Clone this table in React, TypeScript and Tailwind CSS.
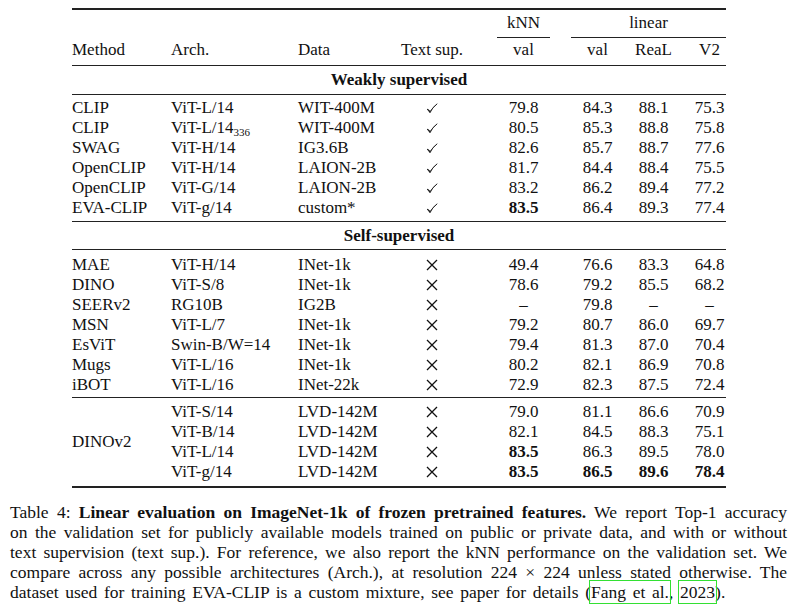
import type { ReactNode } from "react";

type Row = {
  method: string;
  arch: ReactNode;
  data: string;
  text: boolean;
  vals: string[]; // "**" prefix = bold
};

const WEAKLY: Row[] = [
  { method: "CLIP", arch: "ViT-L/14", data: "WIT-400M", text: true, vals: ["79.8", "84.3", "88.1", "75.3"] },
  {
    method: "CLIP",
    arch: (
      <>
        ViT-L/14<sub className="text-[11px]">336</sub>
      </>
    ),
    data: "WIT-400M",
    text: true,
    vals: ["80.5", "85.3", "88.8", "75.8"],
  },
  { method: "SWAG", arch: "ViT-H/14", data: "IG3.6B", text: true, vals: ["82.6", "85.7", "88.7", "77.6"] },
  { method: "OpenCLIP", arch: "ViT-H/14", data: "LAION-2B", text: true, vals: ["81.7", "84.4", "88.4", "75.5"] },
  { method: "OpenCLIP", arch: "ViT-G/14", data: "LAION-2B", text: true, vals: ["83.2", "86.2", "89.4", "77.2"] },
  { method: "EVA-CLIP", arch: "ViT-g/14", data: "custom*", text: true, vals: ["**83.5", "86.4", "89.3", "77.4"] },
];

const SELF: Row[] = [
  { method: "MAE", arch: "ViT-H/14", data: "INet-1k", text: false, vals: ["49.4", "76.6", "83.3", "64.8"] },
  { method: "DINO", arch: "ViT-S/8", data: "INet-1k", text: false, vals: ["78.6", "79.2", "85.5", "68.2"] },
  { method: "SEERv2", arch: "RG10B", data: "IG2B", text: false, vals: ["–", "79.8", "–", "–"] },
  { method: "MSN", arch: "ViT-L/7", data: "INet-1k", text: false, vals: ["79.2", "80.7", "86.0", "69.7"] },
  { method: "EsViT", arch: "Swin-B/W=14", data: "INet-1k", text: false, vals: ["79.4", "81.3", "87.0", "70.4"] },
  { method: "Mugs", arch: "ViT-L/16", data: "INet-1k", text: false, vals: ["80.2", "82.1", "86.9", "70.8"] },
  { method: "iBOT", arch: "ViT-L/16", data: "INet-22k", text: false, vals: ["72.9", "82.3", "87.5", "72.4"] },
];

const DINOV2: Row[] = [
  { method: "", arch: "ViT-S/14", data: "LVD-142M", text: false, vals: ["79.0", "81.1", "86.6", "70.9"] },
  { method: "", arch: "ViT-B/14", data: "LVD-142M", text: false, vals: ["82.1", "84.5", "88.3", "75.1"] },
  { method: "", arch: "ViT-L/14", data: "LVD-142M", text: false, vals: ["**83.5", "86.3", "89.5", "78.0"] },
  { method: "", arch: "ViT-g/14", data: "LVD-142M", text: false, vals: ["**83.5", "**86.5", "**89.6", "**78.4"] },
];

const Num = ({ v }: { v: string }) =>
  v.startsWith("**") ? <span className="font-bold">{v.slice(2)}</span> : <>{v}</>;

// \checkmark and \times style marks
const Mark = ({ on }: { on: boolean }) =>
  on ? (
    <svg width="12" height="11" viewBox="0 0 12 11" className="inline-block align-[-1px]">
      <path d="M1 6.2 Q2.5 7.2 4 9.8 Q6.5 4 11.2 0.8 Q6.8 4.6 4.1 8.4 Q2.8 6.3 1 6.2 Z" fill="#111" stroke="#111" strokeWidth="0.7" strokeLinejoin="round" />
    </svg>
  ) : (
    <svg width="12" height="12" viewBox="0 0 12 12" className="inline-block align-[-1px]">
      <path d="M1 1 L11 11 M11 1 L1 11" stroke="#111" strokeWidth="1.3" />
    </svg>
  );

// cells after the Method column (Arch. .. V2)
const Tail = ({ r }: { r: Row }) => (
  <>
    <div className="w-[127px] whitespace-nowrap">{r.arch}</div>
    <div className="w-[90px]">{r.data}</div>
    <div className="w-[88px] text-center">
      <Mark on={r.text} />
    </div>
    <div className="w-[95px] text-center">
      <Num v={r.vals[0]} />
    </div>
    <div className="w-[53px] text-center">
      <Num v={r.vals[1]} />
    </div>
    <div className="w-[59px] text-center">
      <Num v={r.vals[2]} />
    </div>
    <div className="w-[43px] pl-[10px] text-center">
      <Num v={r.vals[3]} />
    </div>
  </>
);

const DataRow = ({ r }: { r: Row }) => (
  <div className="flex h-[20px] items-center leading-[20px]">
    <div className="w-[99px]">{r.method}</div>
    <Tail r={r} />
  </div>
);

const Rule = ({ className }: { className: string }) => <div className={"bg-[#222] " + className} />;

export default function App() {
  return (
    <div className="relative h-[606px] w-[790px] overflow-hidden bg-white font-['Liberation_Serif',serif] text-[#111]">
      {/* Table */}
      <div className="ml-[72px] w-[654px] pt-[8px] text-[17px]">
        <Rule className="h-[2px]" />

        <div className="mt-[3px] flex h-[20px] items-center leading-[20px]">
          <div className="w-[404px]" />
          <div className="w-[95px] text-center">kNN</div>
          <div className="w-[155px] text-center">linear</div>
        </div>
        <div className="mt-[4px] flex h-[1px]">
          <div className="w-[425px]" />
          <div className="h-[1px] w-[53px] bg-[#222]" />
          <div className="w-[21px]" />
          <div className="h-[1px] w-[155px] bg-[#222]" />
        </div>
        <div className="mt-[2px] flex h-[20px] items-center leading-[20px]">
          <div className="w-[99px]">Method</div>
          <div className="w-[127px]">Arch.</div>
          <div className="w-[90px]">Data</div>
          <div className="w-[88px] text-center whitespace-nowrap">Text sup.</div>
          <div className="w-[95px] text-center">val</div>
          <div className="w-[53px] text-center">val</div>
          <div className="w-[59px] text-center">ReaL</div>
          <div className="w-[43px] pl-[10px] text-center">V2</div>
        </div>
        <Rule className="mt-[5px] h-[1px]" />

        <div className="mt-[4px] h-[20px] text-center font-bold leading-[20px]">Weakly supervised</div>
        <Rule className="mt-[4px] h-[1px]" />
        <div className="mt-[3px]">
          {WEAKLY.map((r, i) => (
            <DataRow key={i} r={r} />
          ))}
        </div>
        <Rule className="mt-[3px] h-[1px]" />

        <div className="mt-[4px] h-[20px] text-center font-bold leading-[20px]">Self-supervised</div>
        <Rule className="mt-[3px] h-[1px]" />
        <div className="mt-[5px]">
          {SELF.map((r, i) => (
            <DataRow key={i} r={r} />
          ))}
        </div>
        <Rule className="mt-[2px] h-[1px]" />

        <div className="mt-[4px] flex">
          <div className="flex w-[99px] items-center">DINOv2</div>
          <div>
            {DINOV2.map((r, i) => (
              <div key={i} className="flex h-[20px] items-center leading-[20px]">
                <Tail r={r} />
              </div>
            ))}
          </div>
        </div>
        <Rule className="mt-[4px] h-[2px]" />
      </div>

      {/* Caption */}
      <div className="mt-[14px] pl-[10px] pr-[3px] text-[17.5px] leading-[20px]">
        <div className="whitespace-nowrap text-justify [text-align-last:justify]">
          Table 4: <b>Linear evaluation on ImageNet-1k of frozen pretrained features.</b> We report Top-1 accuracy
        </div>
        <div className="whitespace-nowrap text-justify [text-align-last:justify]">
          on the validation set for publicly available models trained on public or private data, and with or without
        </div>
        <div className="whitespace-nowrap text-justify [text-align-last:justify]">
          text supervision (text sup.). For reference, we also report the kNN performance on the validation set. We
        </div>
        <div className="whitespace-nowrap text-justify [text-align-last:justify]">
          compare across any possible architectures (Arch.), at resolution 224 × 224 unless stated otherwise. The
        </div>
        <div className="whitespace-nowrap [word-spacing:2.3px]">
          dataset used for training EVA-CLIP is a custom mixture, see paper for details (
          <span className="outline outline-[1.5px] outline-offset-[1px] outline-[#33e033]">Fang et al.</span>,{" "}
          <span className="outline outline-[1.5px] outline-offset-[1px] outline-[#33e033]">2023</span>).
        </div>
      </div>
    </div>
  );
}
